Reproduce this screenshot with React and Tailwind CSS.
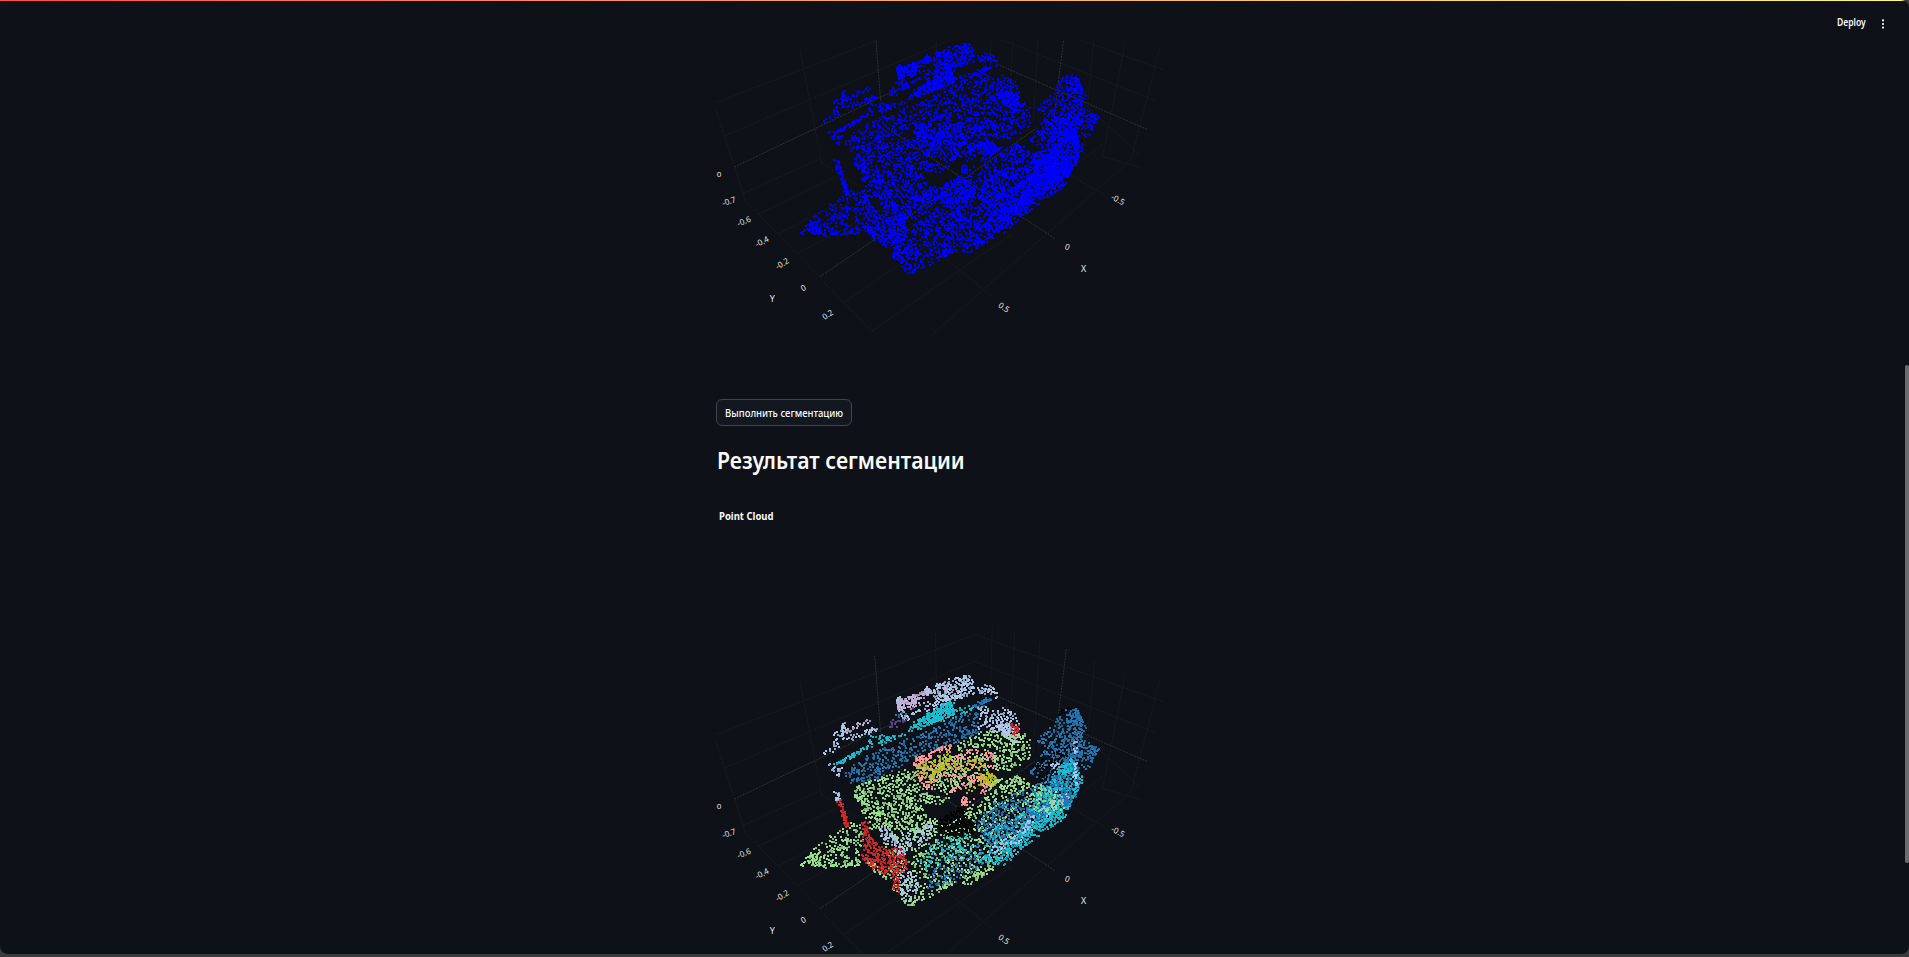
import React from "react";

const LIGHT = "#aec7e8";
const BLUE = "#1f77b4";
const CYAN = "#17becf";
const GREEN = "#98df8a";
const RED = "#d62728";
const PINK = "#ff9896";
const MAUVE = "#c5b0d5";
const PURPLE = "#5b4a86";
const OLIVE = "#bcbd22";
const BLACK = "#000000";

// Each region: colour, density, outline (three units to a pixel).
const REGIONS = [
  [LIGHT, 0.6, [590,232,605,228,622,285,700,245,820,212,825,222,735,255,640,290,615,310,592,270]],
  [LIGHT, 0.9, [588,234,604,228,612,250,594,275]],
  [LIGHT, 0.75, [700,195,735,180,800,165,815,170,822,195,825,215,760,240,705,250]],
  [LIGHT, 0.6, [830,200,860,193,890,205,892,240,870,225,840,222]],
  [MAUVE, 1.3, [592,245,680,205,705,215,650,250,595,275]],
  [LIGHT, 1, [677,198,687,198,690,225,677,225]],
  [MAUVE, 1, [725,192,745,190,740,215,728,215]],
  [MAUVE, 0.4, [600,262,680,240,690,250,610,280]],
  [LIGHT, 1, [422,305,435,305,440,342,425,345]],
  [LIGHT, 0.6, [402,332,428,330,440,350,535,318,540,330,430,372,400,395,385,405,360,405,375,393,400,382]],
  [MAUVE, 0.8, [435,325,508,297,512,305,440,340]],
  [PURPLE, 0.35, [562,300,610,295,640,262,632,300,575,330]],
  [BLUE, 0.4, [580,280,635,262,640,275,590,295]],
  [BLUE, 0.4, [430,455,520,395,640,350,760,295,835,275,840,335,770,370,700,395,640,410,600,440,510,490,450,495]],
  [CYAN, 0.6, [500,375,512,345,550,345,620,340,640,305,715,268,760,265,820,255,830,268,640,335,520,385]],
  [CYAN, 0.9, [402,432,500,376,520,378,410,440]],
  [CYAN, 1, [715,258,740,246,762,250,765,285,700,308,640,330,640,310]],
  [BLUE, 1, [800,260,870,230,878,250,830,268]],
  [LIGHT, 0.6, [382,430,402,435,430,445,428,480,405,470]],
  [LIGHT, 0.45, [835,260,860,255,870,275,910,262,950,280,958,300,955,365,940,370,895,340,870,325,835,335]],
  [LIGHT, 1.5, [895,315,925,315,955,350,950,368,925,360,898,335]],
  [RED, 0.9, [930,310,958,312,955,352,938,345]],
  [GREEN, 0.42, [770,375,830,340,870,330,900,345,980,340,995,360,990,420,920,455,885,450,880,400,830,385,780,400]],
  [GREEN, 0.44, [455,520,480,490,560,465,640,440,655,490,700,530,760,535,720,558,660,545,680,590,720,600,710,640,640,640,560,620,500,590,470,590,495,560]],
  [GREEN, 1.1, [458,522,475,525,500,555,485,555]],
  [GREEN, 0.8, [510,575,560,570,545,595]],
  [GREEN, 0.32, [650,440,760,400,860,400,870,450,840,480,740,520,690,515]],
  [OLIVE, 0.75, [650,430,730,400,750,385,760,430,700,470,655,480]],
  [OLIVE, 0.45, [680,470,740,420,850,415,860,440,745,455,690,500]],
  [OLIVE, 1.2, [835,455,865,455,900,480,885,500,850,500,830,478]],
  [OLIVE, 0.4, [795,505,850,480,855,495,800,520]],
  [PINK, 0.95, [638,415,700,395,715,385,750,370,755,385,715,400,650,440,640,440]],
  [PINK, 0.65, [755,410,820,385,880,400,882,445,865,440,860,410,820,395,765,425]],
  [PINK, 0.65, [735,515,850,460,860,472,745,525]],
  [PINK, 0.5, [645,450,660,460,700,500,710,515,690,515,655,485]],
  [PINK, 0.85, [845,485,865,495,860,525,835,525,800,560,782,560,785,535,800,525,805,545,845,515]],
  [PINK, 0.13, [650,440,860,400,860,470,700,500]],
  [GREEN, 0.33, [880,480,960,470,990,480,1000,500,900,560,800,600,790,570,850,540]],
  [GREEN, 0.6, [928,475,960,465,965,500,930,500]],
  [GREEN, 0.27, [490,590,710,620,880,560,1060,500,1060,560,980,650,900,720,880,750,800,800,775,790,760,785,700,820,625,862,575,810,560,700]],
  [GREEN, 0.5, [605,835,640,845,750,790,880,740,880,752,800,803,775,785,700,825,625,865]],
  [BLACK, 0.8, [715,600,780,560,825,600,820,640,740,650,705,630]],
  [GREEN, 0.36, [295,740,345,680,400,640,460,600,500,620,480,700,480,735,380,742,330,735]],
  [GREEN, 0.7, [318,712,345,700,370,735,480,730,480,740,375,745,330,735]],
  [GREEN, 0.5, [500,715,575,755,560,778,510,750]],
  [LIGHT, 1.2, [402,515,418,515,424,542,410,545]],
  [RED, 1.3, [412,545,425,538,448,620,438,625]],
  [RED, 0.75, [485,610,503,605,512,650,540,670,570,710,575,755,550,762,515,745,485,715,490,690]],
  [LIGHT, 0.75, [535,618,560,615,590,650,620,700,600,720,575,690,545,650]],
  [LIGHT, 0.3, [600,640,700,600,705,640,640,690,610,690]],
  [LIGHT, 0.4, [590,750,625,750,660,790,655,845,625,850,600,820]],
  [RED, 0.65, [555,685,600,680,622,720,622,760,580,760]],
  [RED, 0.7, [575,760,595,760,598,820,580,805]],
  [CYAN, 0.28, [635,740,720,650,800,640,840,680,800,700,680,750]],
  [BLUE, 0.26, [680,760,780,700,860,650,1000,560,1040,560,920,700,760,790,680,810]],
  [BLUE, 0.42, [820,600,880,550,960,510,1040,500,1110,480,1110,560,1000,640,900,700,850,650]],
  [CYAN, 0.7, [820,700,900,690,1000,610,1080,560,1100,590,1000,660,910,738,840,730]],
  [CYAN, 0.2, [840,650,1000,560,1000,640,880,700]],
  [BLUE, 0.5, [1000,500,1110,410,1150,470,1130,530,1100,560,1000,600]],
  [CYAN, 0.42, [1000,540,1050,470,1115,400,1125,430,1150,480,1110,560,1095,595,1050,610,1000,600]],
  [BLUE, 0.4, [1010,360,1100,265,1130,262,1155,320,1150,360,1200,385,1165,450,1120,470,1110,400,1070,410,1000,480,985,460,1030,400]],
  [BLUE, 0.6, [1100,280,1130,265,1158,320,1130,400,1105,360]],
  [BLUE, 0.5, [1040,400,1110,370,1150,400,1120,470,1060,500,1050,440]],
  [BLUE, 0.5, [1150,365,1200,385,1190,405,1150,400]],
  [BLACK, 0.6, [1080,270,1120,256,1125,266,1075,290]],
  [BLACK, 0.35, [1010,430,1110,370,1110,400,1030,490,1010,480]],
  [CYAN, 0.9, [1060,460,1115,412,1125,430,1100,465]],
  [BLUE, 0.35, [980,590,1060,530,1110,500,1110,540,1040,590,960,640]],
  [LIGHT, 0.35, [860,680,960,630,1000,580,1010,590,960,670,880,700]],
  [LIGHT, 0.9, [1118,430,1130,430,1132,500,1120,500]],
  [LIGHT, 0.5, [1122,360,1135,345,1132,400,1122,400]],
  [LIGHT, 0.9, [1050,435,1080,420,1075,455]],
  [LIGHT, 0.3, [1020,570,1100,510,1110,530,1040,590]],
  [GREEN, 0.25, [960,480,1060,500,1100,560,1060,590,980,560]],
  [BLUE, 0.5, [1085,510,1110,500,1125,530,1095,570]],
];

function makeRandom(seed) {
  let s = seed;
  return () => {
    s = (s + 0x6d2b79f5) | 0;
    let t = Math.imul(s ^ (s >>> 15), 1 | s);
    t = (t + Math.imul(t ^ (t >>> 7), 61 | t)) ^ t;
    return ((t ^ (t >>> 14)) >>> 0) / 4294967296;
  };
}

function inside(x, y, p) {
  let hit = false;
  for (let i = 0, j = p.length - 2; i < p.length; j = i, i += 2) {
    if (p[i + 1] > y !== p[j + 1] > y && x < ((p[j] - p[i]) * (y - p[i + 1])) / (p[j + 1] - p[i + 1]) + p[i]) hit = !hit;
  }
  return hit;
}

const random = makeRandom(41);

const CLOUD = REGIONS.map(([color, density, p]) => {
  const xs = p.filter((_, i) => i % 2 === 0);
  const ys = p.filter((_, i) => i % 2 === 1);
  const x0 = Math.min(...xs);
  const x1 = Math.max(...xs);
  const y0 = Math.min(...ys);
  const y1 = Math.max(...ys);
  const tries = Math.round((1.22 * density * (x1 - x0) * (y1 - y0)) / 36);
  const taken = new Set();
  let strong = "";
  let soft = "";
  for (let i = 0; i < tries; i++) {
    for (let k = 0; k < 3; k++) {
      const x = x0 + random() * (x1 - x0);
      const y = y0 + random() * (y1 - y0);
      const px = Math.round(x / 3) - 1;
      const py = Math.round(y / 3) - 1;
      const near = [[0, 0], [1, 0], [-1, 0], [0, 1], [0, -1]];
      const clash = near.some(([a, b]) => taken.has((px + a) * 1000 + py + b));
      if (clash && density < 0.9) continue;
      if (inside(x, y, p)) {
        taken.add(px * 1000 + py);
        const d = `M${px} ${py}h2v2h-2z`;
        if (random() < 0.6) strong += d;
        else soft += d;
      }
      break;
    }
  }
  return { color, strong, soft };
});

const MINOR = [
  [48,344,825,44],[75,443,825,124],[825,44,1390,245],[825,124,1365,338],
  [48,366,136,637],[128,617,365,510],[173,680,420,560],[235,738,480,610],
  [290,798,590,640],[430,945,750,725],[515,1030,940,735],[136,637,515,1030],
  [300,187,365,525],[365,525,470,590],[706,40,712,330],[877,20,868,330],
  [944,40,930,330],[1019,66,1000,400],[1184,122,1150,500],[1278,153,1208,505],
  [1379,183,1293,515],[1208,505,1320,538],[1145,340,1320,502],[1293,515,695,1042],
  [1208,470,960,650],[873,923,600,700],[1210,618,1000,500],
];
const MAJOR = [
  [103,537,590,305],[524,107,542,340],[890,228,1343,425],[1099,88,1062,390],
  [360,866,735,612],[735,612,1010,420],[1064,751,735,537],[735,537,560,420],
];

const LABELS = [
  ["0", 57, 555, 0],["-0.7", 86, 638, -18],["-0.6", 131, 698, -22],["-0.4", 185, 759, -26],
  ["-0.2", 245, 825, -30],["0", 309, 898, -30],["0.2", 382, 978, -32],["Y", 217, 931, 0],
  ["0.5", 913, 956, 34],["0", 1103, 775, 20],["-0.5", 1255, 633, 28],["X", 1151, 841, 0],
];

function Scene({ viewBox, shift, mono, className }) {
  return (
    <svg viewBox={viewBox} className={className} shapeRendering="crispEdges">
      <g transform={`translate(0 ${shift})`}>
        <g shapeRendering="auto" strokeWidth="0.8" fill="none">
          {MINOR.map(([a, b, c, d], i) => (
            <line key={i} x1={a / 3} y1={b / 3} x2={c / 3} y2={d / 3} stroke="#1b1d1f" strokeDasharray="3 1" />
          ))}
          {MAJOR.map(([a, b, c, d], i) => (
            <line key={i} x1={a / 3} y1={b / 3} x2={c / 3} y2={d / 3} stroke="#393a38" strokeDasharray="2 1" />
          ))}
        </g>
        {CLOUD.map((c, i) => (
          <g key={i} fill={mono || c.color}>
            <path d={c.soft} opacity="0.82" />
            <path d={c.strong} />
          </g>
        ))}
        {LABELS.map(([t, x, y, r], i) => (
          <text
            key={i}
            transform={`translate(${x / 3} ${y / 3}) rotate(${r})`}
            textAnchor="middle"
            dominantBaseline="central"
            className={
              t === "X" || t === "Y"
                ? "fill-[#eeeff2] font-['Open_Sans',sans-serif] text-[9px]"
                : "fill-[#eeeff2] font-['Open_Sans',sans-serif] text-[8px]"
            }
          >
            {t}
          </text>
        ))}
      </g>
    </svg>
  );
}

export default function App() {
  return (
    <div className="h-[957px] w-[1909px] overflow-hidden bg-[#3b3b3b] font-['Noto_Sans','Open_Sans',sans-serif]">
      <div className="flex h-[954px] flex-col overflow-hidden rounded-b-lg rounded-tr-lg bg-[#0e1117] text-[#fafafa]">
        <div className="h-px w-full shrink-0 bg-linear-to-r from-[#ff4b4b] to-[#fffd80]" />
        <div className="flex min-h-0 flex-1 justify-between">
          <div className="w-[716px] shrink-0" />
          <main className="flex w-[464px] shrink-0 flex-col items-start pt-[39px]">
            <Scene viewBox="16 40 464 300" shift={-12} mono="#0000ff" className="h-[300px] w-[464px] shrink-0" />
            <button className="mt-[59px] flex h-[27px] w-[136px] shrink-0 items-center justify-center rounded-md border border-[#41444c] bg-[#131720] pt-px whitespace-nowrap">
              <span className="scale-x-[0.95] text-[10px] font-medium">Выполнить сегментацию</span>
            </button>
            <h2 className="mt-[19px] h-[32px] shrink-0 origin-left scale-x-[0.943] pl-px text-[22.5px] leading-[32px] font-semibold whitespace-nowrap">
              Результат сегментации
            </h2>
            <div className="mt-[31px] ml-[3px] h-[16px] shrink-0 origin-left scale-x-[0.95] text-[10px] leading-[17px] font-bold whitespace-nowrap">
              Point Cloud
            </div>
            <Scene viewBox="16 0 464 334" shift={0} className="mt-[96px] h-[334px] w-[464px] shrink-0" />
          </main>
          <div className="flex flex-1 justify-end">
            <header className="flex h-[45px] items-center gap-[16px] pr-[20px]">
              <span className="w-[28px] origin-left scale-x-[0.87] text-[9.8px] font-semibold">Deploy</span>
              <svg viewBox="0 0 4 10" className="h-[10px] w-[4px]" fill="#fafafa">
                <circle cx="2" cy="1.4" r="1.1" />
                <circle cx="2" cy="5" r="1.1" />
                <circle cx="2" cy="8.6" r="1.1" />
              </svg>
            </header>
            <div className="w-[4px] pt-[364px]">
              <div className="h-[498px] rounded-xs bg-[#6b6c70]" />
            </div>
          </div>
        </div>
      </div>
    </div>
  );
}
